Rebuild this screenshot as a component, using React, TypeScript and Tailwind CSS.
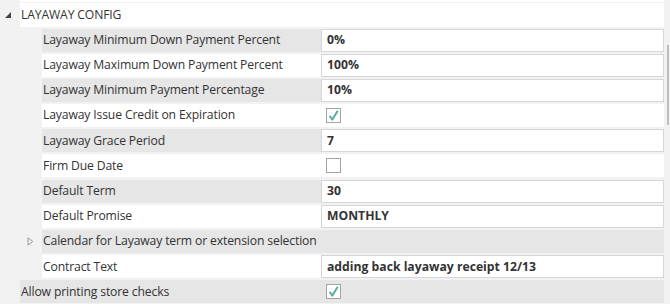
type Row = {
  label: string
  value?: string
  check?: boolean
  gray: boolean
  expander?: boolean
  top?: boolean
}

const rows: Row[] = [
  { label: 'Layaway Minimum Down Payment Percent', value: '0%', gray: true },
  { label: 'Layaway Maximum Down Payment Percent', value: '100%', gray: false },
  { label: 'Layaway Minimum Payment Percentage', value: '10%', gray: true },
  { label: 'Layaway Issue Credit on Expiration', check: true, gray: false },
  { label: 'Layaway Grace Period', value: '7', gray: true },
  { label: 'Firm Due Date', check: false, gray: false },
  { label: 'Default Term', value: '30', gray: true },
  { label: 'Default Promise', value: 'MONTHLY', gray: false },
  { label: 'Calendar for Layaway term or extension selection', gray: true, expander: true },
  { label: 'Contract Text', value: 'adding back layaway receipt 12/13', gray: false },
  { label: 'Allow printing store checks', check: true, gray: true, top: true },
]

function CheckBox({ checked }: { checked: boolean }) {
  return (
    <div className="w-[15px] h-[15px] border border-[#a3a3a3] bg-white flex items-center justify-center">
      {checked && (
        <svg width="13" height="13" viewBox="0 0 13 13">
          <path d="M2.6 6.8 L5.3 10.6 L10.8 1.8" fill="none" stroke="#5fb0a3" strokeWidth="2" strokeLinejoin="round" />
        </svg>
      )}
    </div>
  )
}

function PropRow({ row }: { row: Row }) {
  const bg = row.gray ? 'bg-[#e6e6e6]' : 'bg-white'
  return (
    <div className={`flex h-[23px] ${row.top ? 'pl-[20px]' : 'pl-[42px]'} relative`}>
      {row.expander && (
        <svg className="absolute left-[27px] top-[7px]" width="7" height="9" viewBox="0 0 7 9">
          <path d="M1 0.8 L5.8 4.5 L1 8.2 Z" fill="none" stroke="#9a9a9a" strokeWidth="1" />
        </svg>
      )}
      {row.expander ? (
        <div className={`flex-1 ${bg} flex items-center pl-[1px] text-[#333]`}>{row.label}</div>
      ) : (
        <>
          <div className={`${row.top ? 'w-[301px]' : 'w-[279px]'} ${bg} flex items-center pl-[1px] text-[#333]`}>
            {row.label}
          </div>
          <div className={`flex-1 ${bg} flex items-center`}>
            {row.value !== undefined ? (
              <div className="w-full h-[23px] bg-white border border-[#d6d6d6] flex items-center pl-[5px] font-bold text-[#333] tracking-normal">
                {row.value}
              </div>
            ) : (
              <div className="pl-[5px]">
                <CheckBox checked={!!row.check} />
              </div>
            )}
          </div>
        </>
      )}
    </div>
  )
}

export default function App() {
  return (
    <div
      className="w-[670px] h-[304px] bg-[#f2f2f2] overflow-hidden flex relative text-[12.2px] tracking-[-0.15px] leading-none"
      style={{ fontFamily: '"Open Sans", "Noto Sans", sans-serif' }}
    >
      <div className="w-[664px] flex flex-col">
        {/* tail of previous row */}
        <div className="h-[2px] ml-[20px] bg-white" />
        <div className="h-[24px] mt-[1px] flex items-center relative">
          <svg className="absolute left-[5px] top-[9px]" width="6" height="6" viewBox="0 0 6 6">
            <path d="M6 0 L6 6 L0 6 Z" fill="#444" />
          </svg>
          <div className="ml-[20px] flex-1 h-full bg-white flex items-center pl-[1px] text-[#333]">LAYAWAY CONFIG</div>
        </div>
        <div className="flex flex-col gap-[2.2px] mt-[1.5px]">
          {rows.map(r => (
            <PropRow key={r.label} row={r} />
          ))}
        </div>
      </div>
      {/* scrollbar */}
      <div className="flex-1 relative">
        <div className="absolute left-[3px] top-[45px] w-[2px] h-[80px] bg-[#bdbdbd]" />
      </div>
    </div>
  )
}
